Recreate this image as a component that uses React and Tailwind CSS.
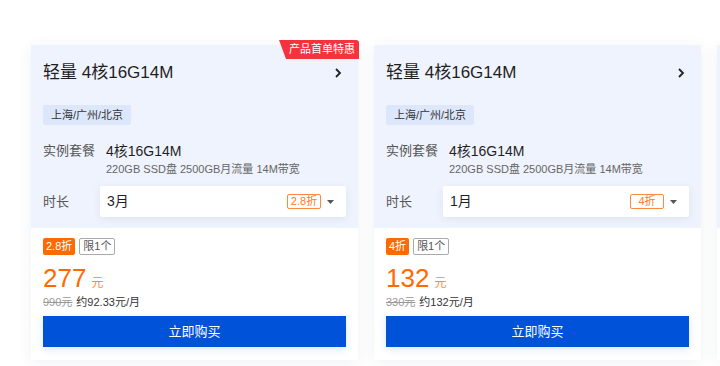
import React from "react";

const font = { fontFamily: '"Liberation Sans", "Noto Sans CJK SC", sans-serif' };

function Card({ badge, months, discount, price, original, monthly }) {
  return (
    <div className="relative w-[327px] h-[315px] shrink-0 bg-white shadow-[0_2px_14px_rgba(30,50,90,0.07)] flex flex-col">
      {badge && (
        <div
          className="absolute top-[-5px] right-[-1px] h-[19px] bg-[#f5333f] text-white text-[11px] leading-[19px] pl-[10px] pr-[4px] whitespace-nowrap rounded-tr-[3px]"
          style={{ clipPath: "polygon(0 0, 100% 0, 100% 100%, 7px 100%)" }}
        >
          产品首单特惠
        </div>
      )}
      <div className="bg-[#eff3fd] px-3 pt-[14px] pb-[11px]">
        <div className="h-7 flex items-center justify-between">
          <span className="text-[17px] text-[#1f1f1f]">轻量 4核16G14M</span>
          <svg width="12" height="12" viewBox="0 0 12 12" className="mr-[2px]">
            <path d="M4 2l4 4-4 4" fill="none" stroke="#222" strokeWidth="1.8" />
          </svg>
        </div>
        <div className="mt-[18px] flex">
          <span className="h-5 px-2 bg-[#dce7fc] text-[11px] leading-5 text-[#333] rounded-[2px]">上海/广州/北京</span>
        </div>
        <div className="mt-4 flex">
          <span className="w-[63px] text-[13px] leading-5 text-[#555]">实例套餐</span>
          <div className="flex flex-col">
            <span className="text-[14px] leading-5 text-[#1f1f1f]">4核16G14M</span>
            <span className="text-[11px] leading-4 text-[#666]">220GB SSD盘 2500GB月流量 14M带宽</span>
          </div>
        </div>
        <div className="mt-[9px] flex items-center">
          <span className="w-[57px] text-[13px] text-[#555]">时长</span>
          <div className="flex-1 h-[31px] bg-white rounded-[2px] shadow-[0_2px_8px_rgba(30,50,90,0.08)] flex items-center pl-[7px] pr-[12px]">
            <span className="flex-1 text-[14px] text-[#1f1f1f]">{months}</span>
            <span className="w-[34px] h-[15px] border border-[#ff8a3d] text-[#ff7a1f] text-[11px] leading-[13px] text-center rounded-[2px]">{discount}</span>
            <svg width="7" height="4" viewBox="0 0 7 4" className="ml-[6px]">
              <path d="M0 0h7L3.5 4z" fill="#555" />
            </svg>
          </div>
        </div>
      </div>
      <div className="px-3 pt-[10px] flex flex-col">
        <div className="flex gap-1 h-[17px]">
          <span className="px-[3px] bg-[#ff6a00] text-white text-[11px] leading-[17px] rounded-[2px]">{discount}</span>
          <span className="px-[3px] border border-[#aaa] text-[#555] text-[11px] leading-[15px] rounded-[2px]">限1个</span>
        </div>
        <div className="mt-[7px] h-8 flex items-end">
          <span className="text-[26px] leading-8 text-[#ff6a00]">{price}</span>
          <span className="ml-[5px] text-[12px] leading-[22px] text-[#ff8a3d]">元</span>
        </div>
        <div className="h-4 flex items-center gap-1 text-[11px]">
          <span className="text-[#999] line-through">{original}</span>
          <span className="text-[#333]">{monthly}</span>
        </div>
        <button className="mt-[6px] h-[31px] w-full bg-[#0052d9] text-white text-[13px] shadow-[0_2px_8px_rgba(0,82,217,0.15)]">
          立即购买
        </button>
      </div>
    </div>
  );
}

function ShellCard() {
  return (
    <div className="w-[327px] h-[315px] shrink-0 bg-white shadow-[0_2px_14px_rgba(30,50,90,0.07)] flex flex-col">
      <div className="h-[183px] bg-[#eff3fd]" />
    </div>
  );
}

export default function App() {
  return (
    <div className="w-[720px] h-[366px] overflow-hidden bg-white" style={font}>
      <div className="flex gap-4 pl-[31px] pt-[45px]">
        <Card badge months="3月" discount="2.8折" price="277" original="990元" monthly="约92.33元/月" />
        <Card months="1月" discount="4折" price="132" original="330元" monthly="约132元/月" />
        <ShellCard />
      </div>
    </div>
  );
}
